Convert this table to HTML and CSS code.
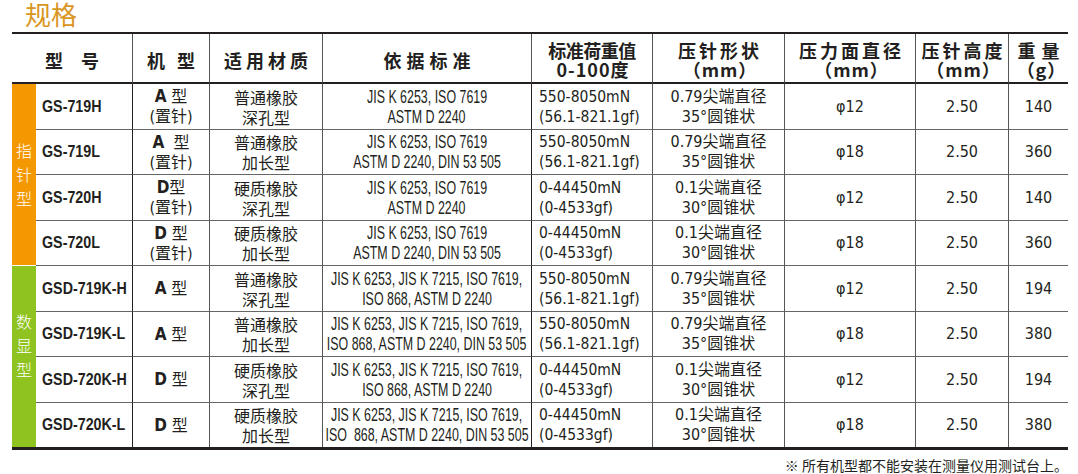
FILE: index.html
```html
<!DOCTYPE html>
<html lang="zh-CN">
<head>
<meta charset="utf-8">
<title>规格</title>
<link rel="stylesheet" href="styles.css">
</head>
<body>
<div class="page">
  <h1 class="title">规格</h1>
  <div class="spec">
    <div class="th th-model">型　号</div>
    <div class="th th-type">机型</div>
    <div class="th th-mat">适用材质</div>
    <div class="th th-std">依据标准</div>
    <div class="th th-load"><span>标准荷重值</span><span class="sub">0-100度</span></div>
    <div class="th th-shape"><span>压针形状</span><span class="sub">（mm）</span></div>
    <div class="th th-dia"><span>压力面直径</span><span class="sub">（mm）</span></div>
    <div class="th th-ht"><span>压针高度</span><span class="sub">（mm）</span></div>
    <div class="th th-wt last"><span>重量</span><span class="sub">（g）</span></div>

    <div class="side side-ptr">指针型</div>
    <div class="td model"><span>GS-719H</span></div>
    <div class="td type"><span><b>A</b> 型</span><span>(置针)</span></div>
    <div class="td mat"><span>普通橡胶</span><span>深孔型</span></div>
    <div class="td std"><span>JIS K 6253, ISO 7619</span><span>ASTM D 2240</span></div>
    <div class="td load"><span>550-8050mN</span><span>(56.1-821.1gf)</span></div>
    <div class="td shape"><span>0.79尖端直径</span><span>35°圆锥状</span></div>
    <div class="td num">φ12</div>
    <div class="td num">2.50</div>
    <div class="td num last">140</div>

    <div class="td model"><span>GS-719L</span></div>
    <div class="td type"><span><b>A</b>&nbsp; 型</span><span>(置针)</span></div>
    <div class="td mat"><span>普通橡胶</span><span>加长型</span></div>
    <div class="td std"><span>JIS K 6253, ISO 7619</span><span>ASTM D 2240, DIN 53 505</span></div>
    <div class="td load"><span>550-8050mN</span><span>(56.1-821.1gf)</span></div>
    <div class="td shape"><span>0.79尖端直径</span><span>35°圆锥状</span></div>
    <div class="td num">φ18</div>
    <div class="td num">2.50</div>
    <div class="td num last">360</div>

    <div class="td model"><span>GS-720H</span></div>
    <div class="td type"><span><b>D</b>型</span><span>(置针)</span></div>
    <div class="td mat"><span>硬质橡胶</span><span>深孔型</span></div>
    <div class="td std"><span>JIS K 6253, ISO 7619</span><span>ASTM D 2240</span></div>
    <div class="td load"><span>0-44450mN</span><span>(0-4533gf)</span></div>
    <div class="td shape"><span>0.1尖端直径</span><span>30°圆锥状</span></div>
    <div class="td num">φ12</div>
    <div class="td num">2.50</div>
    <div class="td num last">140</div>

    <div class="td model"><span>GS-720L</span></div>
    <div class="td type"><span><b>D</b> 型</span><span>(置针)</span></div>
    <div class="td mat"><span>硬质橡胶</span><span>加长型</span></div>
    <div class="td std"><span>JIS K 6253, ISO 7619</span><span>ASTM D 2240, DIN 53 505</span></div>
    <div class="td load"><span>0-44450mN</span><span>(0-4533gf)</span></div>
    <div class="td shape"><span>0.1尖端直径</span><span>30°圆锥状</span></div>
    <div class="td num">φ18</div>
    <div class="td num">2.50</div>
    <div class="td num last">360</div>

    <div class="side side-dig">数显型</div>
    <div class="td model"><span>GSD-719K-H</span></div>
    <div class="td type"><span><b>A</b> 型</span></div>
    <div class="td mat"><span>普通橡胶</span><span>深孔型</span></div>
    <div class="td std"><span>JIS K 6253, JIS K 7215, ISO 7619,</span><span>ISO 868, ASTM D 2240</span></div>
    <div class="td load"><span>550-8050mN</span><span>(56.1-821.1gf)</span></div>
    <div class="td shape"><span>0.79尖端直径</span><span>35°圆锥状</span></div>
    <div class="td num">φ12</div>
    <div class="td num">2.50</div>
    <div class="td num last">194</div>

    <div class="td model"><span>GSD-719K-L</span></div>
    <div class="td type"><span><b>A</b> 型</span></div>
    <div class="td mat"><span>普通橡胶</span><span>加长型</span></div>
    <div class="td std"><span>JIS K 6253, JIS K 7215, ISO 7619,</span><span>ISO 868, ASTM D 2240, DIN 53 505</span></div>
    <div class="td load"><span>550-8050mN</span><span>(56.1-821.1gf)</span></div>
    <div class="td shape"><span>0.79尖端直径</span><span>35°圆锥状</span></div>
    <div class="td num">φ18</div>
    <div class="td num">2.50</div>
    <div class="td num last">380</div>

    <div class="td model"><span>GSD-720K-H</span></div>
    <div class="td type"><span><b>D</b> 型</span></div>
    <div class="td mat"><span>硬质橡胶</span><span>深孔型</span></div>
    <div class="td std"><span>JIS K 6253, JIS K 7215, ISO 7619,</span><span>ISO 868, ASTM D 2240</span></div>
    <div class="td load"><span>0-44450mN</span><span>(0-4533gf)</span></div>
    <div class="td shape"><span>0.1尖端直径</span><span>30°圆锥状</span></div>
    <div class="td num">φ12</div>
    <div class="td num">2.50</div>
    <div class="td num last">194</div>

    <div class="td model end"><span>GSD-720K-L</span></div>
    <div class="td type end"><span><b>D</b> 型</span></div>
    <div class="td mat end"><span>硬质橡胶</span><span>加长型</span></div>
    <div class="td std end"><span>JIS K 6253, JIS K 7215, ISO 7619,</span><span>ISO&nbsp; 868, ASTM D 2240, DIN 53 505</span></div>
    <div class="td load end"><span>0-44450mN</span><span>(0-4533gf)</span></div>
    <div class="td shape end"><span>0.1尖端直径</span><span>30°圆锥状</span></div>
    <div class="td num end">φ18</div>
    <div class="td num end">2.50</div>
    <div class="td num last end">380</div>
  </div>
  <p class="note">※ 所有机型都不能安装在测量仪用测试台上。</p>
</div>
</body>
</html>
```

FILE: styles.css
```css
* { box-sizing: border-box; }
html, body { margin: 0; padding: 0; background: #fff; }
body {
  width: 1078px;
  height: 474px;
  overflow: hidden;
  font-family: "Noto Sans CJK SC", sans-serif;
  color: #231f20;
}
.page { padding: 0 10px 0 12px; }

.title {
  margin: 0 0 4px 13px;
  font-size: 26px;
  line-height: 28px;
  font-weight: 400;
  color: #d9961e;
}

.spec {
  display: grid;
  width: 1056px;
  grid-template-columns: 24px 97px 77px 113px 209px 121px 132px 131px 93px 59px;
  grid-template-rows: 50px 46px 45px 46px 45px 46px 45px 46px 44px;
  border-top: 2px solid #231f20;
  border-bottom: 3px solid #231f20;
}

.th {
  display: flex;
  flex-direction: column;
  align-items: center;
  justify-content: center;
  padding-top: 4px;
  font-family: "Noto Sans CJK SC", sans-serif;
  font-weight: 700;
  font-size: 18px;
  line-height: 19px;
  border-right: 1px solid #555;
  border-bottom: 2px solid #231f20;
  white-space: nowrap;
}
.th-model { grid-column: span 2; }
.th-type { letter-spacing: 12px; padding-left: 12px; }
.th-mat { letter-spacing: 4px; padding-left: 4px; }
.th-std { letter-spacing: 5px; padding-left: 5px; }
.th-load { letter-spacing: -0.5px; }
.th-load .sub { letter-spacing: 2px; padding-left: 2px; }
.th-shape, .th-dia, .th-ht { letter-spacing: 3px; padding-left: 3px; }
.th-wt { letter-spacing: 6px; padding-left: 6px; }
.th .sub { letter-spacing: 1px; }

.side {
  writing-mode: vertical-rl;
  text-orientation: upright;
  grid-row: span 4;
  display: flex;
  align-items: center;
  justify-content: center;
  color: #fff;
  font-size: 16px;
  font-weight: 300;
  letter-spacing: 8px;
  line-height: 24px;
}
.side-ptr { background: #f39800; border-bottom: 1px solid #fff; padding-top: 8px; }
.side-dig { background: #8fc31f; padding-top: 0; padding-bottom: 14px; }

.td {
  display: flex;
  flex-direction: column;
  align-items: center;
  justify-content: center;
  border-right: 1px solid #555;
  border-bottom: 1px solid #666;
  font-size: 16px;
  line-height: 20px;
  white-space: nowrap;
}
.td.end { border-bottom: none; }
.last { border-right: none; }

.model {
  align-items: flex-start;
  padding-left: 6px;
  font-family: "Liberation Sans", sans-serif;
  font-weight: 700;
  font-size: 17px;
  border-right-color: #231f20;
}
.model span {
  transform: scaleX(0.84);
  transform-origin: left center;
}
.type {
  font-family: "DejaVu Sans", "Noto Sans CJK SC", sans-serif;
  font-stretch: condensed;
  font-size: 16px;
}
.type b {
  font-family: "DejaVu Sans", sans-serif;
  font-weight: 700;
  font-size: 17px;
}
.mat { font-size: 16px; }
.std {
  font-family: "Liberation Sans", sans-serif;
  font-size: 18px;
  border-right-color: #231f20;
}
.std span {
  transform: scaleX(0.69);
  transform-origin: center center;
}
.load {
  align-items: flex-start;
  padding-left: 7px;
  font-family: "DejaVu Sans", sans-serif;
  font-stretch: condensed;
  font-size: 15.5px;
}
.shape, .num {
  font-family: "DejaVu Sans", "Noto Sans CJK SC", sans-serif;
  font-stretch: condensed;
  font-size: 16px;
}

.note {
  margin: 7px 0 0;
  text-align: right;
  font-size: 14px;
  line-height: 16px;
}
```
